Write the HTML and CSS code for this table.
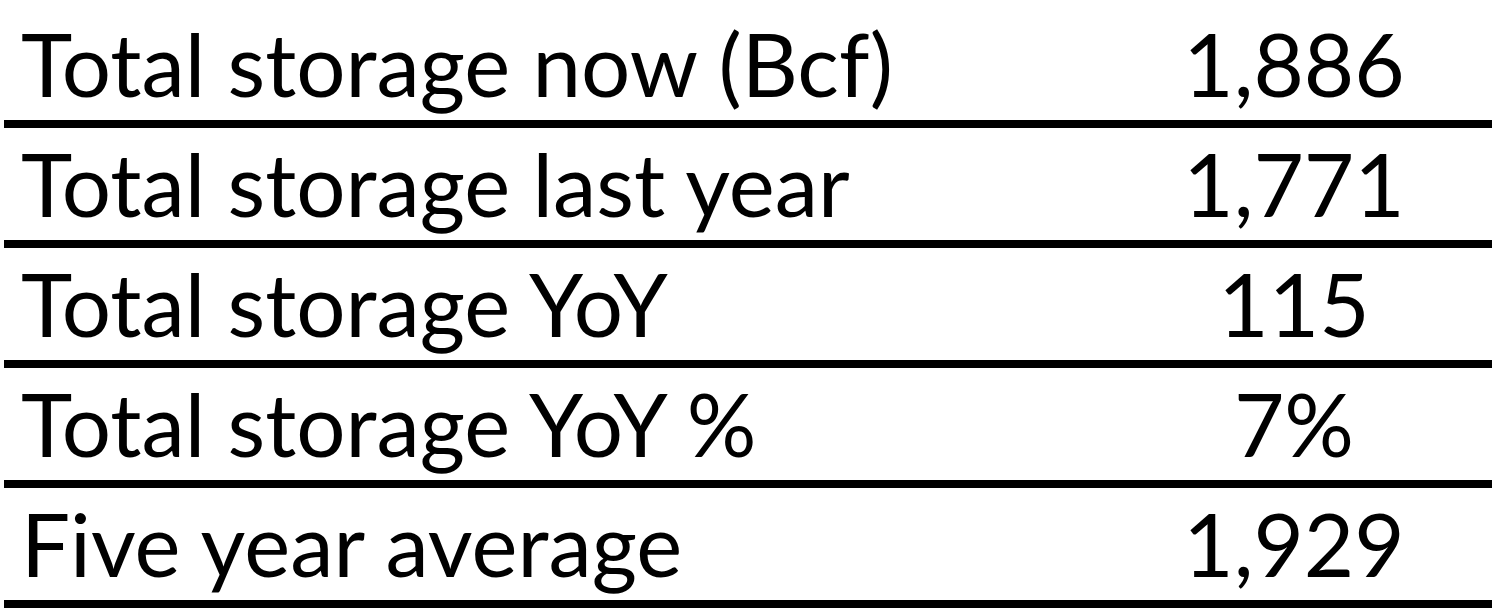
FILE: index.html
```html
<!DOCTYPE html>
<html lang="en">
<head>
  <meta charset="UTF-8">
  <title>Storage summary</title>
  <link rel="stylesheet" href="styles.css">
</head>
<body>
  <div class="summary">
    <div class="row">
      <div class="label">Total storage now (Bcf)</div>
      <div class="value">1,886</div>
    </div>
    <div class="row">
      <div class="label">Total storage last year</div>
      <div class="value">1,771</div>
    </div>
    <div class="row">
      <div class="label">Total storage YoY</div>
      <div class="value">115</div>
    </div>
    <div class="row">
      <div class="label">Total storage YoY %</div>
      <div class="value">7%</div>
    </div>
    <div class="row">
      <div class="label">Five year average</div>
      <div class="value">1,929</div>
    </div>
  </div>
</body>
</html>
```

FILE: styles.css
```css
body {
  margin: 0;
  background: #fff;
  color: #000;
  font-family: Lato, "Open Sans", sans-serif;
}
.summary {
  margin: 0 4px;
  padding-top: 8px;
}
.row {
  display: flex;
  height: 112px;
  border-bottom: 8px solid #000;
  font-size: 87px;
  line-height: 112px;
}
.label {
  width: 1092px;
  padding-left: 17px;
  box-sizing: border-box;
}
.value {
  flex: 1;
  text-align: center;
}
```
